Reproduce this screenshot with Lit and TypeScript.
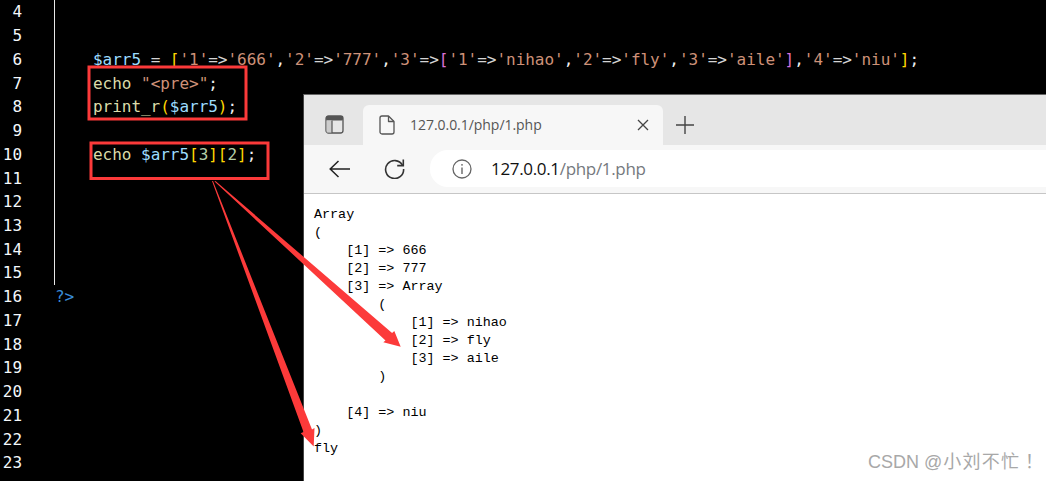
import { LitElement, html, css, svg } from "lit";
import { customElement } from "lit/decorators.js";

const t = (cls: string, s: string) => html`<span class=${cls}>${s}</span>`;
const pair = (k: string, v: string) => html`${t("s", `'${k}'`)}${t("o", "=>")}${t("s", `'${v}'`)}`;

const codeLines: Record<number, unknown> = {
  6: html`${t("v", "$arr5")} ${t("o", "=")} ${t("g", "[")}${pair("1", "666")}${t("w", ",")}${pair("2", "777")}${t("w", ",")}${t("s", "'3'")}${t("o", "=>")}${t("p", "[")}${pair("1", "nihao")}${t("w", ",")}${pair("2", "fly")}${t("w", ",")}${pair("3", "aile")}${t("p", "]")}${t("w", ",")}${pair("4", "niu")}${t("g", "]")}${t("w", ";")}`,
  7: html`${t("f", "echo")} ${t("s", '"<pre>"')}${t("w", ";")}`,
  8: html`${t("f", "print_r")}${t("g", "(")}${t("v", "$arr5")}${t("g", ")")}${t("w", ";")}`,
  10: html`${t("f", "echo")} ${t("v", "$arr5")}${t("g", "[")}${t("n", "3")}${t("g", "][")}${t("n", "2")}${t("g", "]")}${t("w", ";")}`,
};

const pageText = `Array
(
    [1] => 666
    [2] => 777
    [3] => Array
        (
            [1] => nihao
            [2] => fly
            [3] => aile
        )

    [4] => niu
)
fly`;

@customElement("app-root")
export class AppRoot extends LitElement {
  static styles = css`
    :host { display: block; width: 1046px; height: 481px; position: relative; overflow: hidden; background: #000; }
    .editor { display: flex; flex-direction: column; margin-top: 0.4px; font: 16px/23.74px "DejaVu Sans Mono", monospace; letter-spacing: -0.03px; }
    .row { display: flex; height: 23.74px; white-space: pre; }
    .num { width: 22px; text-align: right; color: #f4f8fb; margin-right: 32px; flex: none; }
    .code { padding-left: 38px; border-left: 1px solid transparent; }
    .guide { border-left-color: #e8e8e8; margin-top: -2px; height: 25.74px; line-height: 27.74px; }
    .close { padding-left: 0; color: #3a8ad6; }
    .v { color: #9cdcfe; } .s { color: #ce9178; } .o { color: #d4d4d4; } .f { color: #dcdcaa; }
    .g { color: #ffd700; } .p { color: #da70d6; } .w { color: #f0f0f0; } .n { color: #b5cea8; }

    .browser { position: absolute; left: 303px; top: 94px; right: 0; bottom: 0; display: flex; flex-direction: column; background: #fff; border-top: 1px solid #666; border-left: 1px solid #444; }
    .strip { display: flex; align-items: stretch; height: 50px; background: #e6e6e6; flex: none; }
    .side { width: 59px; flex: none; display: flex; align-items: center; padding-left: 21px; box-sizing: border-box; padding-top: 9px; }
    .tab { width: 300px; margin-top: 10px; background: #f7f7f7; border-radius: 6px 6px 0 0; display: flex; align-items: center; flex: none; box-sizing: border-box; padding-left: 16px; }
    .tab-title { font: 14px "Open Sans", sans-serif; color: #555; margin-left: 15px; width: 227px; white-space: nowrap; letter-spacing: -0.04px; padding-bottom: 2px; }
    .plus { margin-left: 13px; display: flex; align-items: center; padding-top: 9px; }
    .toolbar { height: 48px; flex: none; background: #f7f7f7; border-bottom: 1px solid #c6c6c6; display: flex; align-items: flex-start; }
    .nav { display: flex; align-items: center; height: 37px; margin-top: 5px; flex: none; }
    .back { margin-left: 25px; }
    .reload { margin-left: 34px; }
    .addr { flex: 1; height: 37px; margin-top: 5px; margin-left: 25px; background: #fff; border-radius: 18px 0 0 18px; display: flex; align-items: center; padding-left: 22px; }
    .url { margin-left: 19px; font: 17px "Open Sans", sans-serif; color: #75797e; letter-spacing: -0.33px; white-space: nowrap; }
    .host { color: #111; }
    pre { margin: 0; padding: 12px 0 0 10px; font: 13.4px/18px "Liberation Mono", monospace; color: #000; }

    .marks { position: absolute; left: 0; top: 0; pointer-events: none; }
    .wm { position: absolute; left: 868px; top: 450px; font: 18px/24px "Liberation Sans", "Noto Sans CJK SC", sans-serif; color: #a8a8a8; white-space: nowrap; }
    .cjk { letter-spacing: 1.2px; margin-left: 1px; }
    .bang { margin-left: 5px; }
  `;

  render() {
    const nums = Array.from({ length: 20 }, (_, i) => i + 4);
    return html`
      <div class="editor">
        ${nums.map((n) => html`<div class="row">
          <span class="num">${n}</span>
          ${n === 16
            ? html`<span class="code close">?&gt;</span>`
            : html`<span class="code ${n <= 15 ? "guide" : ""}">${codeLines[n] ?? ""}</span>`}
        </div>`)}
      </div>

      <div class="browser">
        <div class="strip">
          <div class="side">
            <svg width="19" height="19" viewBox="0 0 19 19" fill="none">
              <rect x="1" y="1" width="17" height="17" rx="2.5" stroke="#555" stroke-width="1.3"/>
              <rect x="1" y="1" width="17" height="4.5" rx="1.5" fill="#555"/>
              <rect x="1.6" y="5.5" width="5.4" height="12" fill="#ccc"/>
              <path d="M7 5.5V18" stroke="#555" stroke-width="1.2"/>
            </svg>
          </div>
          <div class="tab">
            <svg width="16" height="20" viewBox="0 0 16 20" fill="none" stroke="#555" stroke-width="1.3" stroke-linejoin="round">
              <path d="M3 1H9.5L15 6.5V17a2 2 0 0 1-2 2H3a2 2 0 0 1-2-2V3a2 2 0 0 1 2-2Z"/>
              <path d="M9.5 1V6.5H15"/>
            </svg>
            <span class="tab-title">127.0.0.1/php/1.php</span>
            <svg width="12" height="12" viewBox="0 0 12 12" stroke="#444" stroke-width="1.3"><path d="M1 1L11 11M11 1L1 11"/></svg>
          </div>
          <div class="plus">
            <svg width="18" height="18" viewBox="0 0 18 18" stroke="#444" stroke-width="1.4"><path d="M9 0V18M0 9H18"/></svg>
          </div>
        </div>
        <div class="toolbar">
          <div class="nav back">
            <svg width="21" height="18" viewBox="0 0 21 18" fill="none" stroke="#222" stroke-width="1.5"><path d="M21 9H1M9.5 1L1.2 9l8.3 8"/></svg>
          </div>
          <div class="nav reload">
            <svg width="21" height="21" viewBox="0 0 21 21" fill="none" stroke="#333" stroke-width="1.6"><path d="M18.5 7.2A9 9 0 1 0 19.6 11"/><path d="M19.3 1.4V7.6H13.2"/></svg>
          </div>
          <div class="addr">
            <svg width="20" height="20" viewBox="0 0 20 20" fill="none" stroke="#666" stroke-width="1.3"><circle cx="10" cy="10" r="9"/><path d="M10 8.6V15" stroke-width="1.4"/><circle cx="10" cy="5.8" r=".9" fill="#666" stroke="none"/></svg>
            <span class="url"><span class="host">127.0.0.1</span>/php/1.php</span>
          </div>
        </div>
        <pre>${pageText}</pre>
      </div>

      <svg class="marks" width="1046" height="481" viewBox="0 0 1046 481">
        ${svg`<g fill="none" stroke="#fc3a3a" stroke-width="3">
          <rect x="89" y="67" width="157" height="52"/>
          <rect x="91" y="143" width="177" height="35.5"/>
        </g>
        <g fill="#fc3a3a">
          <path d="M214.5 181.5L215.5 181L392.1 333L394.3 331L400.7 346.7L383.3 342.3L385.5 340.4Z"/>
          <path d="M212 181L213 181L312 429.5L314.5 428L313.7 446.5L300.7 433.3L303.5 432Z"/>
        </g>`}
      </svg>
      <div class="wm">CSDN @<span class="cjk">小刘不忙</span><span class="bang">！</span></div>
    `;
  }
}
